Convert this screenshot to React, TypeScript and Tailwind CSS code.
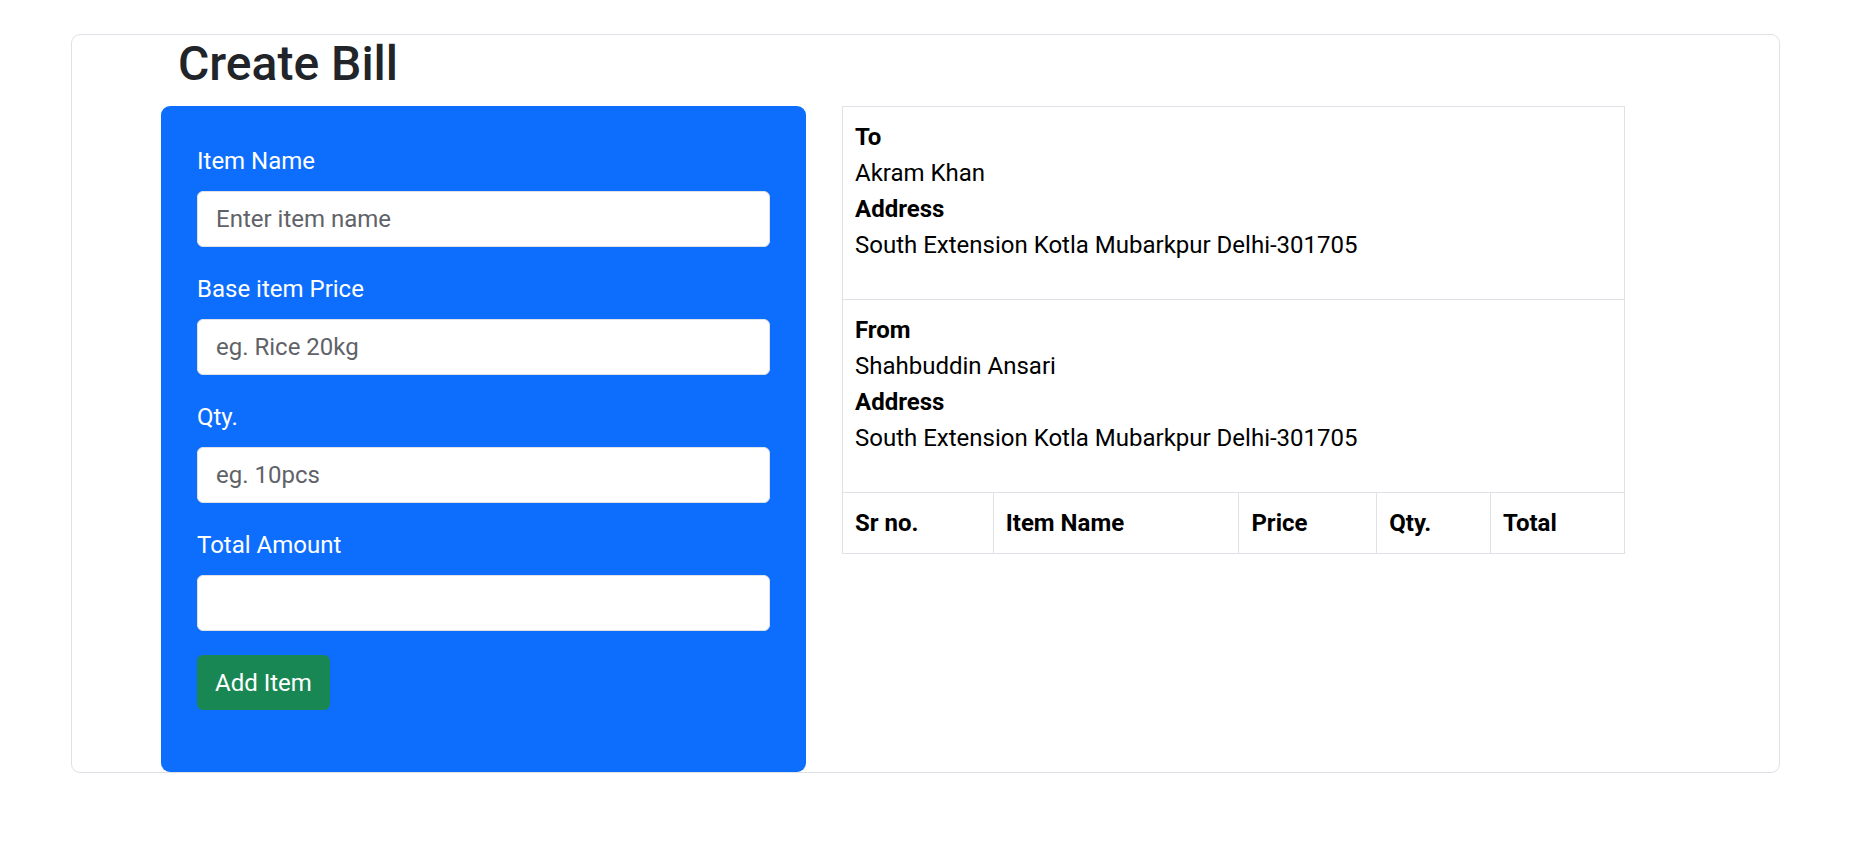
import React from 'react';

const fields = [
  { label: 'Item Name', placeholder: 'Enter item name' },
  { label: 'Base item Price', placeholder: 'eg. Rice 20kg' },
  { label: 'Qty.', placeholder: 'eg. 10pcs' },
  { label: 'Total Amount', placeholder: '' },
];

const columns = [
  { name: 'Sr no.', width: 'w-[151px]' },
  { name: 'Item Name', width: 'w-[246px]' },
  { name: 'Price', width: 'w-[138px]' },
  { name: 'Qty.', width: 'w-[114px]' },
  { name: 'Total', width: 'w-[134px]' },
];

function PartyCell({ title, name, address }: { title: string; name: string; address: string }) {
  return (
    <td colSpan={5} className="border border-[#dee2e6] p-[12px] align-top">
      <div className="font-bold">{title}</div>
      <div>{name}</div>
      <div className="font-bold">Address</div>
      <p className="mb-[24px]">{address}</p>
    </td>
  );
}

export default function App() {
  return (
    <div
      className="min-h-screen bg-white px-[71px] pt-[34px] text-[24px] leading-[36px]"
      style={{ fontFamily: 'Roboto, "Liberation Sans", sans-serif' }}
    >
      <div className="border border-[#dee2e6] rounded-[9px]">
        <h2 className="ml-[106px] mb-[13px] text-[48px] leading-[58px] font-medium text-[#212529]">
          Create Bill
        </h2>

        <div className="flex items-start gap-[36px] ml-[89px]">
          {/* Item form */}
          <form
            className="w-[645px] bg-[#0d6efd] rounded-[9px] px-[36px] pt-[37px] pb-[38px]"
            onSubmit={e => e.preventDefault()}
          >
            {fields.map(field => (
              <div key={field.label} className="mb-[24px]">
                <label className="block mb-[12px] text-white">{field.label}</label>
                <input
                  type="text"
                  placeholder={field.placeholder}
                  className="block w-full h-[56px] px-[18px] bg-white border border-[#dee2e6] rounded-[6px] text-[24px] text-[#212529] placeholder:text-[#5f6368] outline-none"
                />
              </div>
            ))}
            <button
              type="submit"
              className="h-[55px] px-[18px] bg-[#198754] text-white rounded-[6px] mb-[24px]"
            >
              Add Item
            </button>
          </form>

          {/* Bill preview */}
          <table className="w-[783px] border-collapse text-black">
            <tbody>
              <tr>
                <PartyCell
                  title="To"
                  name="Akram Khan"
                  address="South Extension Kotla Mubarkpur Delhi-301705"
                />
              </tr>
              <tr>
                <PartyCell
                  title="From"
                  name="Shahbuddin Ansari"
                  address="South Extension Kotla Mubarkpur Delhi-301705"
                />
              </tr>
              <tr>
                {columns.map(col => (
                  <th
                    key={col.name}
                    className={`${col.width} border border-[#dee2e6] p-[12px] text-left font-bold`}
                  >
                    {col.name}
                  </th>
                ))}
              </tr>
            </tbody>
          </table>
        </div>
      </div>
    </div>
  );
}
